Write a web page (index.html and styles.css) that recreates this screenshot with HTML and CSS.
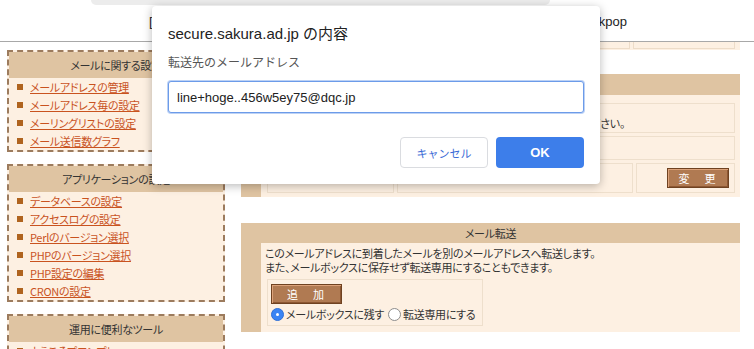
FILE: index.html
```html
<!DOCTYPE html>
<html lang="ja">
<head>
    <meta charset="UTF-8">
    <title>メール転送設定</title>
    <link rel="stylesheet" href="styles.css">
</head>
<body>
    <div class="chrome">
        <div class="omnibox"></div>
        <div class="account-row">
            <span>[</span>
            <span>kpop</span>
        </div>
    </div>

    <div class="page">
        <nav class="sidebar">
            <div class="menu-box">
                <div class="menu-head">メールに関する設定</div>
                <ul class="menu-list">
                    <li><a href="#">メールアドレスの管理</a></li>
                    <li><a href="#">メールアドレス毎の設定</a></li>
                    <li><a href="#">メーリングリストの設定</a></li>
                    <li><a href="#">メール送信数グラフ</a></li>
                </ul>
            </div>
            <div class="menu-box">
                <div class="menu-head">アプリケーションの設定</div>
                <ul class="menu-list">
                    <li><a href="#">データベースの設定</a></li>
                    <li><a href="#">アクセスログの設定</a></li>
                    <li><a href="#">Perlのバージョン選択</a></li>
                    <li><a href="#">PHPのバージョン選択</a></li>
                    <li><a href="#">PHP設定の編集</a></li>
                    <li><a href="#">CRONの設定</a></li>
                </ul>
            </div>
            <div class="menu-box">
                <div class="menu-head">運用に便利なツール</div>
                <ul class="menu-list">
                    <li><a href="#">ようこそプロンプト</a></li>
                </ul>
            </div>
        </nav>

        <div class="main">
            <div class="prev-table">
                <div class="cell grow"></div>
                <div class="cell last"></div>
            </div>

            <section class="panel">
                <div class="panel-head">メールアドレスの設定</div>
                <div class="panel-body">
                    <div class="row row-msg">メールアドレスの設定を変更する場合には、下記の各項目を入力してください。</div>
                    <div class="row row-blank"></div>
                    <div class="row row-cols">
                        <div class="cell c1"></div>
                        <div class="cell c2"></div>
                        <div class="cell c3"><button class="brown-btn">変　更</button></div>
                    </div>
                </div>
            </section>

            <section class="panel panel-fwd">
                <div class="panel-head">メール転送</div>
                <div class="panel-body">
                    <p class="desc">このメールアドレスに到着したメールを別のメールアドレスへ転送します。</p>
                    <p class="desc">また、メールボックスに保存せず転送専用にすることもできます。</p>
                    <div class="fwd-box">
                        <button class="brown-btn add-btn">追　加</button>
                        <div class="radios">
                            <label><span class="radio on"></span>メールボックスに残す</label>
                            <label><span class="radio"></span>転送専用にする</label>
                        </div>
                    </div>
                </div>
            </section>
        </div>
    </div>

    <div class="dialog">
        <div class="dialog-title">secure.sakura.ad.jp の内容</div>
        <div class="dialog-label">転送先のメールアドレス</div>
        <input class="dialog-input" type="text" value="line+hoge..456w5ey75@dqc.jp">
        <div class="dialog-buttons">
            <button class="btn-cancel">キャンセル</button>
            <button class="btn-ok">OK</button>
        </div>
    </div>
</body>
</html>
```

FILE: styles.css
```css
body { margin: 0; background: #fff; font-family: "Noto Sans CJK JP", sans-serif; font-size: 11px; letter-spacing: -0.3px; color: #333; font-feature-settings: "palt"; }

/* browser chrome strip */
.chrome { height: 42px; border-bottom: 1px solid #a8a8a8; box-sizing: border-box; }
.omnibox { margin-left: 91px; width: 459px; height: 5px; background: #ececec; border-radius: 0 0 10px 10px; }
.account-row { display: flex; justify-content: space-between; margin: 9px 0 0 149px; width: 478px; font-family: "Liberation Sans", "Noto Sans CJK JP", sans-serif; font-size: 13px; letter-spacing: 0; color: #222; line-height: 16px; }

.page { display: flex; gap: 16px; padding: 0 14px 0 7px; }

/* sidebar */
.sidebar { width: 218px; flex: none; padding-top: 8px; }
.menu-box { border: 2px dashed #9c7b5d; background: #fdf0e2; margin-bottom: 12px; }
.menu-head { height: 26px; line-height: 26px; background: #dfc4a2; text-align: center; color: #333; }
.menu-list { list-style: none; margin: 0; padding: 0 0 0 8px; }
.menu-list li { display: flex; align-items: center; height: 18px; }
.menu-list li::before { content: ""; width: 6px; height: 6px; background: #b0641f; margin-right: 7px; }
.menu-list a { color: #c9531f; text-decoration: underline; }

/* main column */
.main { flex: 1; }
.prev-table { display: flex; gap: 3px; height: 8px; background: #fdf0e2; padding: 0 5px 1px 26px; box-sizing: border-box; }
.prev-table .cell { border: 1px solid #eddcc8; border-top: none; }
.prev-table .grow { flex: 1; }
.prev-table .last { width: 100px; }

.panel { background: #dfc4a2; margin-top: 24px; }
.panel-fwd { margin-top: 26px; }
.panel-head { height: 21px; line-height: 21px; text-align: center; color: #333; }
.panel-fwd .panel-head { height: 20px; line-height: 21px; }
.panel-body { margin-left: 20px; background: #fdf0e2; padding: 8px 5px 4px 6px; }

.row { border: 1px solid #eedfcc; margin-bottom: 3px; box-sizing: border-box; }
.row-msg { height: 30px; padding: 12px 0 0 4px; line-height: 15px; white-space: nowrap; overflow: hidden; }
.row-blank { height: 24px; }
.row-cols { display: flex; gap: 3px; border: none; height: 30px; margin-bottom: 0; }
.row-cols .cell { border: 1px solid #eedfcc; }
.c1 { width: 125px; }
.c2 { flex: 1; }
.c3 { width: 99px; display: flex; align-items: center; justify-content: flex-end; padding-right: 5px; box-sizing: border-box; }

.brown-btn { width: 62px; height: 20px; padding: 0; background: #b07a52; color: #fff; border: 1px solid #6f4221; box-shadow: inset 1px 1px 0 #dca27a, inset -1px -1px 0 #8c5733; font-family: "Noto Sans CJK JP", sans-serif; font-size: 11px; letter-spacing: 2px; }

.panel-fwd .panel-body { padding: 3px 0 6px 4px; }
.desc { margin: 0; height: 14px; line-height: 14px; color: #333; white-space: nowrap; }
.fwd-box { margin: 5px 0 0 2px; width: 216px; height: 47px; border: 1px solid #eedfcc; box-sizing: border-box; padding: 4px 0 0 3px; }
.add-btn { width: 71px; }
.radios { display: flex; gap: 4px; margin-top: 3px; }
.radios label { display: flex; align-items: center; gap: 2px; line-height: 15px; white-space: nowrap; }
.radio { width: 13px; height: 13px; border-radius: 50%; border: 1px solid #8d8d8d; background: #fff; box-sizing: border-box; position: relative; }
.radio.on { background: #3a84f4; border-color: #2f6fd6; }
.radio.on::after { content: ""; position: absolute; left: 4px; top: 4px; width: 3px; height: 3px; border-radius: 50%; background: #fff; }

/* alert dialog */
.dialog { position: absolute; left: 152px; top: 6px; width: 448px; height: 178px; box-sizing: border-box; padding: 18px 16px 0; background: #fff; border-radius: 4px; box-shadow: 0 2px 10px rgba(0, 0, 0, 0.28); font-family: "Liberation Sans", "Noto Sans CJK JP", sans-serif; font-feature-settings: normal; letter-spacing: 0; }
.dialog-title { font-size: 15px; line-height: 20px; color: #222; }
.dialog-label { margin-top: 12px; font-size: 12px; line-height: 14px; color: #555; }
.dialog-input { display: block; margin-top: 11px; width: 416px; height: 32px; box-sizing: border-box; padding: 0 8px; border: 1px solid #6c9be9; border-radius: 3px; box-shadow: 0 0 0 1px rgba(108, 155, 233, 0.45); font-family: "Liberation Sans", sans-serif; font-size: 13px; color: #222; outline: none; }
.dialog-buttons { display: flex; justify-content: flex-end; gap: 8px; margin-top: 24px; }
.dialog-buttons button { width: 88px; height: 31px; border-radius: 4px; font-family: "Liberation Sans", "Noto Sans CJK JP", sans-serif; }
.btn-cancel { background: #fff; border: 1px solid #dadce0; color: #3a6bd6; font-size: 11px; }
.btn-ok { background: #3d7eea; border: none; color: #fff; font-size: 13px; font-weight: bold; }
```
